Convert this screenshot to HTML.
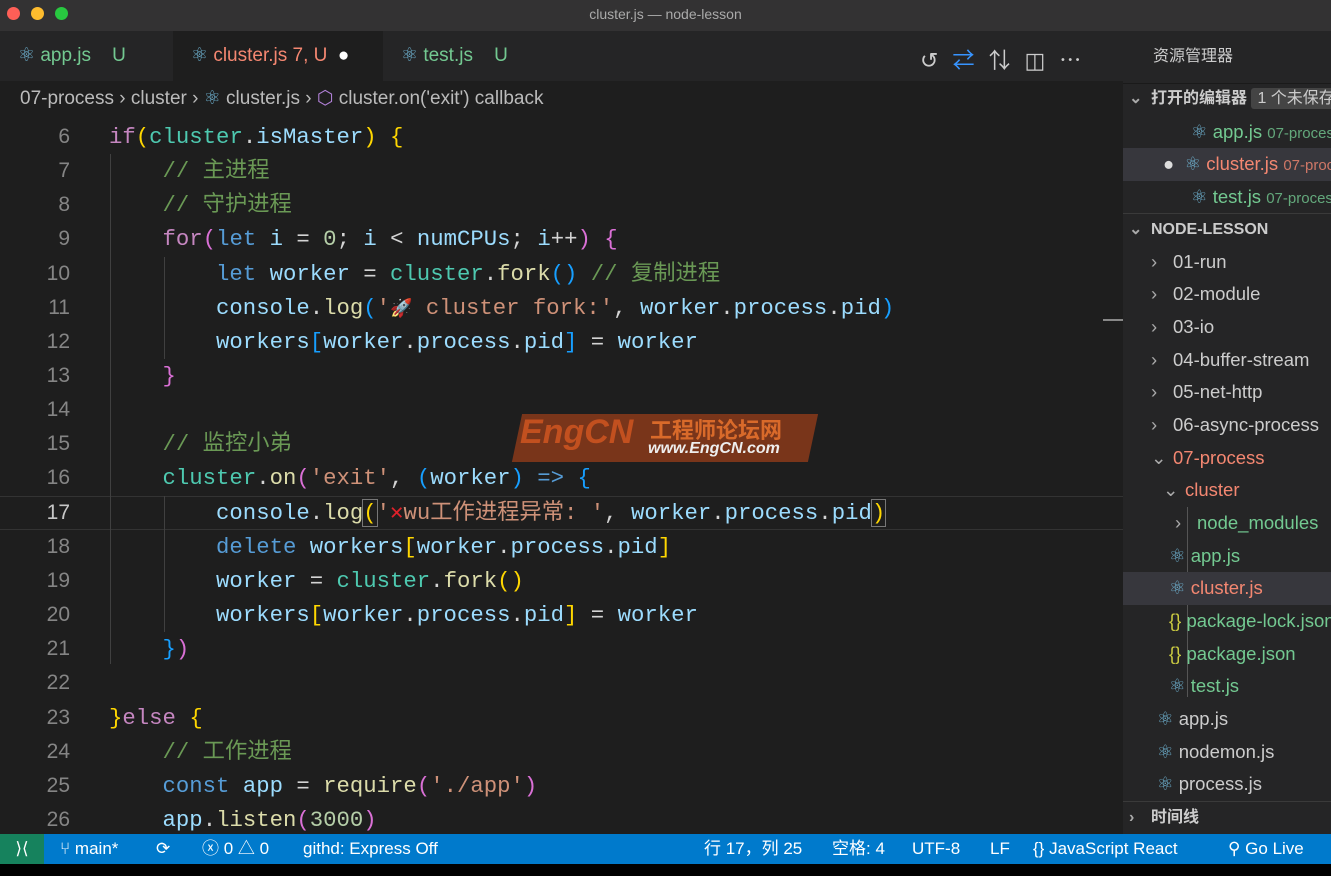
<!DOCTYPE html>
<html><head><meta charset="utf-8"><style>
*{margin:0;padding:0;box-sizing:border-box}
body{width:1331px;height:876px;background:#000;overflow:hidden;position:relative;font-family:"Liberation Sans","Noto Sans CJK SC",sans-serif;color:#ccc}
.abs{position:absolute}
#title{left:0;top:0;width:1331px;height:31px;background:#333233;}
#tabs{left:0;top:31px;width:1123px;height:50px;background:#252526}
.tab{position:absolute;top:0;height:50px;line-height:50px;font-size:19px;padding-left:18px}
#crumb{left:0;top:81px;width:1123px;height:36px;background:#1e1e1e;font-size:19px;line-height:36px;color:#bbb;padding-left:20px}
#editor{left:0;top:117px;width:1123px;height:717px;background:#1e1e1e;overflow:hidden}
.ln{position:absolute;left:0;width:70px;text-align:right;font-family:"Liberation Sans",sans-serif;font-size:21px;color:#858585;height:34px;line-height:34px}
.cl{position:absolute;left:109px;font-family:"Liberation Mono","Noto Sans CJK SC",monospace;font-size:22.3px;white-space:pre;color:#d4d4d4;height:34px;line-height:34px}
.cl span{line-height:34px}
.k{color:#c586c0}.b{color:#569cd6}.v{color:#9cdcfe}.t{color:#4ec9b0}.f{color:#dcdcaa}.s{color:#ce9178}.c{color:#6a9955}.n{color:#b5cea8}
.y{color:#ffd700}.p{color:#da70d6}.bl{color:#179fff}
#side{left:1123px;top:31px;width:208px;height:803px;background:#252526;overflow:hidden}
.si{position:absolute;font-size:18.5px;white-space:nowrap;height:32px;line-height:32px}
.g{color:#73c991}.r{color:#f48771}.w{color:#ccc}
.ch{display:inline-block;color:#aaa;width:22px}
#status{left:0;top:834px;width:1331px;height:30px;background:#007acc;color:#fff;font-size:17px;line-height:30px}
.st{position:absolute;top:0;white-space:nowrap}
.guide{position:absolute;width:1px;background:#404040}
</style></head><body>
<div id="title" class="abs">
<div class="abs" style="left:7px;top:7px;width:13px;height:13px;border-radius:50%;background:#fe5f57"></div>
<div class="abs" style="left:31px;top:7px;width:13px;height:13px;border-radius:50%;background:#febc2e"></div>
<div class="abs" style="left:55px;top:7px;width:13px;height:13px;border-radius:50%;background:#28c840"></div>
<div class="abs" style="left:0;width:1331px;top:6px;text-align:center;font-size:14px;color:#aaa">cluster.js — node-lesson</div>
</div>
<div id="tabs" class="abs">
<div class="tab" style="left:0;width:173px;color:#73c991"><span style="color:#6fb3d2">⚛</span> app.js &nbsp;&nbsp; U</div>
<div class="tab" style="left:173px;width:210px;background:#1e1e1e;color:#f48771"><span style="color:#6fb3d2">⚛</span> cluster.js 7, U &nbsp;<span style="color:#fff">●</span></div>
<div class="tab" style="left:383px;width:178px;color:#73c991"><span style="color:#6fb3d2">⚛</span> test.js &nbsp;&nbsp; U</div>
<div class="abs" style="left:920px;top:12px;font-size:22px;color:#ccc;letter-spacing:14px;white-space:nowrap">↺<span style="color:#3794ff">⇄</span>⇅◫⋯</div>
</div>
<div id="crumb" class="abs">07-process › cluster › <span style="color:#6fb3d2">⚛</span> cluster.js › <span style="color:#b180d7">⬡</span> cluster.on('exit') callback</div>
<div id="editor" class="abs">
<div class="abs" style="left:0;top:379px;width:1123px;height:34px;border-top:1px solid #333;border-bottom:1px solid #333"></div>
<div class="guide" style="left:110px;top:37px;height:510px"></div>
<div class="guide" style="left:164px;top:140px;height:102px"></div>
<div class="guide" style="left:164px;top:379px;height:136px"></div>
<div class="abs" style="left:1103px;top:202px;width:20px;height:2px;background:#888"></div>
<div class="ln" style="top:3px">6</div><div class="cl" style="top:3px"><span class="k">if</span><span class="y">(</span><span class="t">cluster</span>.<span class="v">isMaster</span><span class="y">)</span> <span class="y">{</span></div>
<div class="ln" style="top:37px">7</div><div class="cl c" style="top:37px">    // 主进程</div>
<div class="ln" style="top:71px">8</div><div class="cl c" style="top:71px">    // 守护进程</div>
<div class="ln" style="top:105px">9</div><div class="cl" style="top:105px">    <span class="k">for</span><span class="p">(</span><span class="b">let</span> <span class="v">i</span> = <span class="n">0</span>; <span class="v">i</span> &lt; <span class="v">numCPUs</span>; <span class="v">i</span>++<span class="p">)</span> <span class="p">{</span></div>
<div class="ln" style="top:140px">10</div><div class="cl" style="top:140px">        <span class="b">let</span> <span class="v">worker</span> = <span class="t">cluster</span>.<span class="f">fork</span><span class="bl">()</span> <span class="c">// 复制进程</span></div>
<div class="ln" style="top:174px">11</div><div class="cl" style="top:174px">        <span class="v">console</span>.<span class="f">log</span><span class="bl">(</span><span class="s">'<span style="font-size:18px">🚀</span> cluster fork:'</span>, <span class="v">worker</span>.<span class="v">process</span>.<span class="v">pid</span><span class="bl">)</span></div>
<div class="ln" style="top:208px">12</div><div class="cl" style="top:208px">        <span class="v">workers</span><span class="bl">[</span><span class="v">worker</span>.<span class="v">process</span>.<span class="v">pid</span><span class="bl">]</span> = <span class="v">worker</span></div>
<div class="ln" style="top:242px">13</div><div class="cl" style="top:242px">    <span class="p">}</span></div>
<div class="ln" style="top:276px">14</div>
<div class="ln" style="top:310px">15</div><div class="cl c" style="top:310px">    // 监控小弟</div>
<div class="ln" style="top:344px">16</div><div class="cl" style="top:344px">    <span class="t">cluster</span>.<span class="f">on</span><span class="p">(</span><span class="s">'exit'</span>, <span class="bl">(</span><span class="v">worker</span><span class="bl">)</span> <span class="b">=&gt;</span> <span class="bl">{</span></div>
<div class="ln" style="top:379px;color:#c6c6c6">17</div><div class="cl" style="top:379px">        <span class="v">console</span>.<span class="f">log</span><span class="y" style="outline:1px solid #777">(</span><span class="s">'<span style="color:#e0212a;font-weight:bold">✕</span>wu工作进程异常: '</span>, <span class="v">worker</span>.<span class="v">process</span>.<span class="v">pid</span><span class="y" style="outline:1px solid #777">)</span></div>
<div class="ln" style="top:413px">18</div><div class="cl" style="top:413px">        <span class="b">delete</span> <span class="v">workers</span><span class="y">[</span><span class="v">worker</span>.<span class="v">process</span>.<span class="v">pid</span><span class="y">]</span></div>
<div class="ln" style="top:447px">19</div><div class="cl" style="top:447px">        <span class="v">worker</span> = <span class="t">cluster</span>.<span class="f">fork</span><span class="y">()</span></div>
<div class="ln" style="top:481px">20</div><div class="cl" style="top:481px">        <span class="v">workers</span><span class="y">[</span><span class="v">worker</span>.<span class="v">process</span>.<span class="v">pid</span><span class="y">]</span> = <span class="v">worker</span></div>
<div class="ln" style="top:515px">21</div><div class="cl" style="top:515px">    <span class="bl">}</span><span class="p">)</span></div>
<div class="ln" style="top:549px">22</div>
<div class="ln" style="top:584px">23</div><div class="cl" style="top:584px"><span class="y">}</span><span class="k">else</span> <span class="y">{</span></div>
<div class="ln" style="top:618px">24</div><div class="cl c" style="top:618px">    // 工作进程</div>
<div class="ln" style="top:652px">25</div><div class="cl" style="top:652px">    <span class="b">const</span> <span class="v">app</span> = <span class="f">require</span><span class="p">(</span><span class="s">'./app'</span><span class="p">)</span></div>
<div class="ln" style="top:686px">26</div><div class="cl" style="top:686px">    <span class="v">app</span>.<span class="f">listen</span><span class="p">(</span><span class="n">3000</span><span class="p">)</span></div>
<div class="abs" style="left:517px;top:297px;width:296px;height:48px;transform:skewX(-12deg);background:#8a3a1a;opacity:.85"></div>
<div class="abs" style="left:520px;top:296px;font:italic bold 34px 'Liberation Sans',sans-serif;color:#c2501f;white-space:nowrap">EngCN</div>
<div class="abs" style="left:650px;top:296px;font:bold 22px 'Noto Sans CJK SC',sans-serif;color:#d96a2a;white-space:nowrap">工程师论坛网</div>
<div class="abs" style="left:648px;top:323px;font:italic bold 16px 'Liberation Sans',sans-serif;color:#eee;white-space:nowrap">www.EngCN.com</div>
</div>
<div id="side" class="abs">
<div class="si w" style="left:30px;top:10px;font-size:16px">资源管理器</div>
<div class="abs" style="left:0;top:52px;width:208px;height:1px;background:#1a1a1a"></div>
<div class="si w" style="left:6px;top:52px;font-size:16px;font-weight:bold"><span class="ch">⌄</span>打开的编辑器 <span style="background:#444;padding:2px 6px;border-radius:3px;font-weight:normal">1 个未保存</span></div>
<div class="si g" style="left:68px;top:85px"><span style="color:#6fb3d2">⚛</span> app.js <span style="font-size:15px;opacity:.8">07-process</span></div>
<div class="abs" style="left:0;top:117px;width:208px;height:33px;background:#37373d"></div>
<div class="si r" style="left:40px;top:117px"><span style="color:#ddd">●</span> &nbsp;<span style="color:#6fb3d2">⚛</span> cluster.js <span style="font-size:15px;opacity:.8">07-process</span></div>
<div class="si g" style="left:68px;top:150px"><span style="color:#6fb3d2">⚛</span> test.js <span style="font-size:15px;opacity:.8">07-process</span></div>
<div class="abs" style="left:0;top:182px;width:208px;height:1px;background:#3a3a3a"></div>
<div class="si w" style="left:6px;top:183px;font-size:16px;font-weight:bold"><span class="ch">⌄</span>NODE-LESSON</div>
<div class="si w" style="left:28px;top:215px"><span class="ch">›</span>01-run</div>
<div class="si w" style="left:28px;top:247px"><span class="ch">›</span>02-module</div>
<div class="si w" style="left:28px;top:280px"><span class="ch">›</span>03-io</div>
<div class="si w" style="left:28px;top:313px"><span class="ch">›</span>04-buffer-stream</div>
<div class="si w" style="left:28px;top:345px"><span class="ch">›</span>05-net-http</div>
<div class="si w" style="left:28px;top:378px"><span class="ch">›</span>06-async-process</div>
<div class="si r" style="left:28px;top:411px"><span class="ch">⌄</span>07-process</div>
<div class="si r" style="left:40px;top:443px"><span class="ch">⌄</span>cluster</div>
<div class="abs" style="left:64px;top:476px;width:1px;height:190px;background:#555"></div>
<div class="si g" style="left:52px;top:476px"><span class="ch">›</span>node_modules</div>
<div class="si g" style="left:46px;top:509px"><span style="color:#6fb3d2">⚛</span> app.js</div>
<div class="abs" style="left:0;top:541px;width:208px;height:33px;background:#37373d"></div>
<div class="si r" style="left:46px;top:541px"><span style="color:#6fb3d2">⚛</span> cluster.js</div>
<div class="si g" style="left:46px;top:574px"><span style="color:#cbcb41">{}</span> package-lock.json</div>
<div class="si g" style="left:46px;top:607px"><span style="color:#cbcb41">{}</span> package.json</div>
<div class="si g" style="left:46px;top:639px"><span style="color:#6fb3d2">⚛</span> test.js</div>
<div class="si w" style="left:34px;top:672px"><span style="color:#6fb3d2">⚛</span> app.js</div>
<div class="si w" style="left:34px;top:705px"><span style="color:#6fb3d2">⚛</span> nodemon.js</div>
<div class="si w" style="left:34px;top:737px"><span style="color:#6fb3d2">⚛</span> process.js</div>
<div class="abs" style="left:0;top:770px;width:208px;height:1px;background:#3a3a3a"></div>
<div class="si w" style="left:6px;top:771px;font-size:16px;font-weight:bold"><span class="ch">›</span>时间线</div>
</div>
<div id="status" class="abs">
<div class="abs" style="left:0;top:0;width:44px;height:30px;background:#16825d;text-align:center">⟩⟨</div>
<div class="st" style="left:60px">⑂ main*</div>
<div class="st" style="left:156px">⟳</div>
<div class="st" style="left:202px">ⓧ 0 △ 0</div>
<div class="st" style="left:303px">githd: Express Off</div>
<div class="st" style="left:704px">行 17，列 25</div>
<div class="st" style="left:832px">空格: 4</div>
<div class="st" style="left:912px">UTF-8</div>
<div class="st" style="left:990px">LF</div>
<div class="st" style="left:1033px">{} JavaScript React</div>
<div class="st" style="left:1228px">⚲ Go Live</div>
</div>
</body></html>
